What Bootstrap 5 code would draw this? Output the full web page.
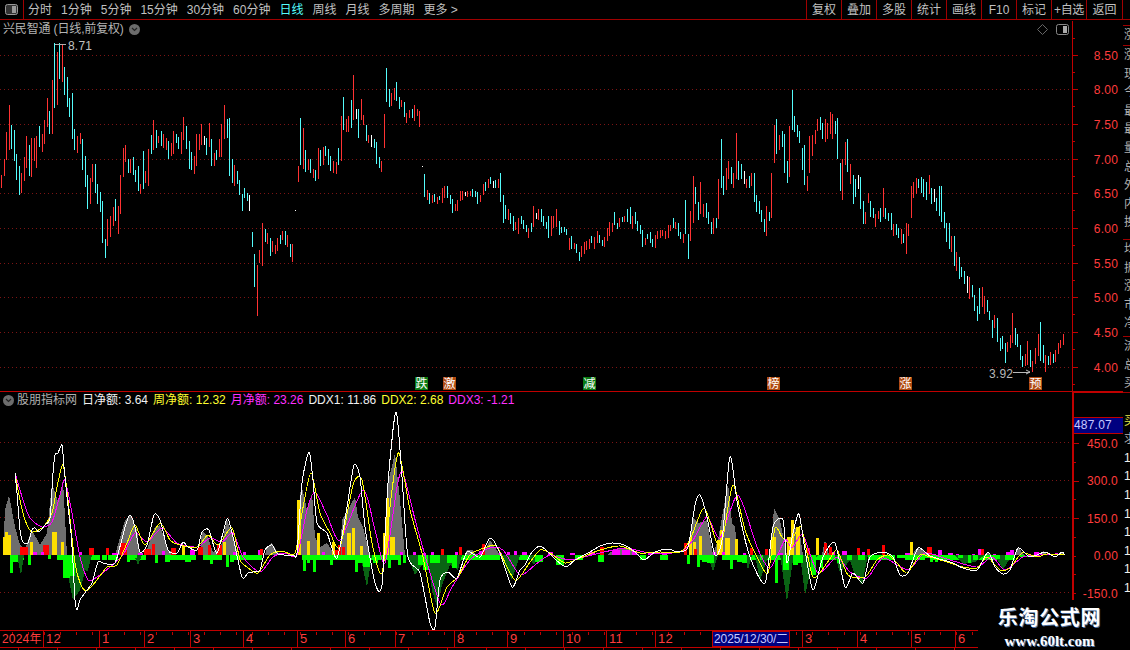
<!DOCTYPE html>
<html lang="zh-CN">
<head>
  <meta charset="UTF-8">
  <title>兴民智通 日线</title>
  <meta name="viewport" content="width=device-width, initial-scale=1">
  <link href="https://cdn.jsdelivr.net/npm/bootstrap@5.3.0/dist/css/bootstrap.min.css" rel="stylesheet">
  <style>
    html, body { height: 650px; overflow: hidden; background: #000; }
    body { font-family: "Liberation Sans", "Noto Sans CJK SC", sans-serif; font-size: 12px; line-height: 1; color: #c0c0c0; }
    .tool-bar { height: 20px; border-bottom: 1px solid #a00000; }
    .tool-toggle { width: 24px; border-right: 1px solid #a00000; }
    .period-list { gap: 9px; padding-left: 4px; }
    .period-on { color: #54fcfc; }
    .tool-btn { width: 35px; border-left: 1px solid #a00000; white-space: nowrap; }
    .tool-btn:last-child { width: 37px; border-right: 1px solid #a00000; }
    .tool-btn.tight { letter-spacing: -.3px; }
    .tool-gap { width: 7px; }
    .chart-col { width: 1123px; }
    .chart-col svg { display: block; }
    .chart-col text { font-family: "Liberation Sans", "Noto Sans CJK SC", sans-serif; }
    .pane-box { position: relative; }
    .pane-title { position: absolute; left: 3px; top: 3px; gap: 5px; color: #b4b4b4; font-size: 12px; letter-spacing: -.15px; }
    .pane-legend { position: absolute; left: 3px; top: 2px; gap: 5px; font-size: 12px; white-space: nowrap; }
    .pane-legend .leg-gray { margin-left: -2px; }
    .pane-tools { position: absolute; right: 54px; top: 4px; gap: 8px; }
    .drop-dot { width: 11px; height: 11px; border-radius: 50%; background: #6c6c6c; }
    .leg-gray { color: #b0b0b0; }
    .leg-white { color: #f0f0f0; }
    .leg-yellow { color: #ffff30; }
    .leg-pink { color: #ff30ff; }
    .side-strip { width: 7px; overflow: hidden; font-size: 12px; color: #b0b0b0; white-space: nowrap; }
    .strip-sec { overflow: hidden; border-top: 1px solid #a00000; }
    .strip-row { height: 18.6px; line-height: 18.6px; padding-left: 1px; }
    .strip-mark { color: #e6e64a; }
    .strip-num { color: #f0f0f0; }
    .water-mark { position: absolute; right: 0; bottom: 0; width: 152px; height: 50px; background: #000; text-align: center; padding-right: 9px; }
    .water-cn { font-weight: 700; font-size: 20px; letter-spacing: .7px; color: #fff; text-shadow: 1px 1px 0 #4a6ea0; margin-top: 7px; line-height: 22px; }
    .water-url { font-family: "Liberation Serif", serif; font-weight: 700; font-size: 15px; color: #fff; text-shadow: 1px 1px 0 #4a6ea0; margin-top: 5px; }
  </style>
</head>
<body>

<div class="d-flex flex-column position-relative">
  <!-- top toolbar -->
  <div class="tool-bar d-flex align-items-stretch">
    <div class="tool-toggle d-flex align-items-center justify-content-center">
      <svg width="13" height="11" viewBox="0 0 13 11"><rect x=".5" y=".5" width="12" height="10" rx="2" fill="#333" stroke="#999"/><rect x="7" y="2" width="4" height="7" fill="#999"/></svg>
    </div>
    <div class="period-list d-flex align-items-center">
      <span>分时</span><span>1分钟</span><span>5分钟</span><span>15分钟</span><span>30分钟</span><span>60分钟</span>
      <span class="period-on">日线</span><span>周线</span><span>月线</span><span>多周期</span><span>更多 &gt;</span>
    </div>
    <div class="d-flex align-items-stretch ms-auto">
      <div class="tool-btn d-flex align-items-center justify-content-center">复权</div>
      <div class="tool-btn d-flex align-items-center justify-content-center">叠加</div>
      <div class="tool-btn d-flex align-items-center justify-content-center">多股</div>
      <div class="tool-btn d-flex align-items-center justify-content-center">统计</div>
      <div class="tool-btn d-flex align-items-center justify-content-center">画线</div>
      <div class="tool-btn d-flex align-items-center justify-content-center">F10</div>
      <div class="tool-btn d-flex align-items-center justify-content-center">标记</div>
      <div class="tool-btn tight d-flex align-items-center justify-content-center">+自选</div>
      <div class="tool-btn d-flex align-items-center justify-content-center">返回</div>
    </div>
    <div class="tool-gap"></div>
  </div>

  <div class="d-flex">
    <div class="chart-col">
      <div class="pane-box">
        <svg id="priceSvg" width="1123" height="372" viewBox="0 20 1123 372"></svg>
        <div class="pane-title d-flex align-items-center">
          <span>兴民智通 (日线,前复权)</span>
          <span class="drop-dot d-flex align-items-center justify-content-center"><svg width="7" height="5" viewBox="0 0 7 5"><path d="M1 1l2.5 2.5L6 1" fill="none" stroke="#222" stroke-width="1.2"/></svg></span>
        </div>
        <div class="pane-tools d-flex align-items-center">
          <svg width="11" height="11" viewBox="0 0 11 11"><path d="M5.5.5l5 5-5 5-5-5z" fill="none" stroke="#666"/></svg>
          <svg width="13" height="11" viewBox="0 0 13 11"><rect x=".5" y=".5" width="12" height="10" rx="2" fill="#000" stroke="#888"/><rect x="7" y="2" width="4" height="7" fill="#aaa"/></svg>
        </div>
      </div>
      <div class="pane-box">
        <svg id="ddxSvg" width="1123" height="238" viewBox="0 392 1123 238"></svg>
        <div class="pane-legend d-flex align-items-center">
          <span class="drop-dot d-flex align-items-center justify-content-center"><svg width="7" height="5" viewBox="0 0 7 5"><path d="M1 1l2.5 2.5L6 1" fill="none" stroke="#222" stroke-width="1.2"/></svg></span>
          <span class="leg-gray">股朋指标网</span>
          <span class="leg-white">日净额: 3.64</span>
          <span class="leg-yellow">周净额: 12.32</span>
          <span class="leg-pink">月净额: 23.26</span>
          <span class="leg-white">DDX1: 11.86</span>
          <span class="leg-yellow">DDX2: 2.68</span>
          <span class="leg-pink">DDX3: -1.21</span>
        </div>
      </div>
      <svg id="dateSvg" width="1123" height="20" viewBox="0 630 1123 20"></svg>
    </div>
    <div class="side-strip" id="sideStrip"></div>
  </div>

  <div class="water-mark">
    <div class="water-cn">乐淘公式网</div>
    <div class="water-url">www.60lt.com</div>
  </div>
</div>

<script src="https://cdn.jsdelivr.net/npm/bootstrap@5.3.0/dist/js/bootstrap.bundle.min.js"></script>
<script>
  const AXIS = "#c00000", GRID = "#7c1414", LABEL = "#ff3c3c";
  const COL = { r: "#ff3232", c: "#54fcfc", w: "#ffffff" };

  function line(x1, y1, x2, y2, c, extra) {
    return `<line x1="${x1}" y1="${y1 + .5}" x2="${x2}" y2="${y2 + .5}" stroke="${c}" shape-rendering="crispEdges" ${extra || ""}/>`;
  }
  function dotted(y) { return line(0, y, 1072, y, GRID, 'stroke-dasharray="1 3"'); }
  function label(x, y, txt, c, anchor, size) {
    return `<text x="${x}" y="${y}" fill="${c}" font-size="${size || 12}" text-anchor="${anchor || "end"}" letter-spacing=".2">${txt}</text>`;
  }

  // candle bars read off the picture: [offset x, offset y, "colour x,top,bottom ..."] at 3x
  const candleGroups = [
    [0, 110, "r4,195,233 r13,148,200 r19,67,152 r28,-15,120 c34,45,117 c43,60,152 c49,132,209 c58,168,254 r64,189,249 r73,141,212 r79,78,174 c88,105,197 r94,84,201 r103,84,153 r109,78,173 c118,48,110 r127,72,125 r133,30,101 r142,-36,51 c148,3,71 r157,-90,72 c163,-201,-6 r172,-174,-15 c178,-201,-93 r187,-198,-84 c193,-129,-45 c202,-99,-9 c208,-36,21 c217,-51,87 c223,57,120 r232,78,129 r241,69,102 c247,87,180 c256,138,231 c262,195,297 r271,204,282 r277,162,216 c286,162,249 c292,222,282 c301,246,306 c307,273,399 c316,387,444 r322,327,408 r331,318,381 r340,291,348 c346,267,333 r355,288,372 r361,195,312 r370,114,201 r376,105,156 c385,147,189 r391,148,190 c400,141,195 c406,180,216 c415,168,243 r421,222,251 c430,123,237 r436,183,219 r445,117,228 c454,75,132 r460,30,120 c469,60,114 r475,78,99 c484,63,108 r490,72,114 r499,84,120 c505,93,147 r514,99,138 r520,63,132 c529,72,99 c535,81,117 r544,66,132 r550,21,90 c559,48,117 c568,93,177 c574,126,180 r583,138,192 r589,72,168 r598,72,120 r604,42,105 w613,78,105 c619,84,135 r628,39,111 c634,87,168 r643,129,168 c649,120,150 r658,87,141 r664,42,141 r673,-15,87 c682,27,84 c688,24,198 c697,147,219 r703,165,228 c712,183,222 c718,210,255 c727,252,303 c733,234,264 c742,249,273 w748,255,303 c757,366,411 c763,432,531 r772,465,618 r778,420,459 r787,339,468 c796,357,396 r802,369,402 c811,384,438 r817,393,426 r826,405,432 r832,384,423 c841,375,402 r847,363,390 c856,363,405 r862,375,411 c871,402,441 r877,402,456 w886,300,303"],
    [290, 60, "r25,318,366 c31,174,315 r40,204,327 c46,270,336 r55,297,330 c61,297,339 r70,327,354 c76,330,363 r85,264,357 c91,270,318 r100,261,315 c106,258,288 c115,267,315 c121,288,333 r130,303,339 r139,306,342 c145,264,315 r154,168,303 c160,111,210 r169,177,216 r175,168,216 c184,120,204 r190,45,180 w199,147,177 c205,147,234 r214,117,180 r220,165,195 c229,195,243 r235,225,249 w244,225,261 c253,237,264 c259,246,312 c268,291,324 r274,303,336 r283,162,264 c289,24,126 c298,87,141 r304,99,138 r313,84,120 c319,66,123 c328,111,147 r334,120,141 c343,126,171 r349,159,189 r358,150,174 c367,147,174 r373,135,183 r382,147,168 r388,153,201 w397,319,322"],
    [400, 160, "c72,42,111 r82,90,120 c88,99,132 r97,105,129 c103,102,126 r112,111,132 c118,108,120 r127,84,129 r133,78,114 c142,78,114 c151,105,132 c157,117,159 r166,132,153 r172,120,153 r181,93,123 r187,93,120 w196,96,108 r202,93,111 r211,93,108 c217,87,111 c226,93,111 c232,96,132 r241,105,126 r250,72,105 c256,66,93 r265,57,84 c271,51,72 w280,63,84 c286,60,84 r295,57,84 c301,39,126 c310,105,189 c316,135,177 r325,147,180 c331,159,192 c340,168,213 r346,186,210 r355,174,222 c364,168,192 c370,180,207 c379,195,216 r385,204,234 c394,189,216 r400,138,201 w409,159,177 r415,147,180 c424,147,186 c430,168,198 c439,186,207 c445,168,234 r454,168,228 r460,168,204 r469,147,201 c478,183,225 c484,201,219 c493,201,216 c499,207,225 r508,234,270 c514,228,267 r523,249,267 c529,252,279 c538,276,303 r544,258,291 r553,246,282 r559,243,270 r568,237,267 c574,228,249 r583,231,267 r592,213,249 c598,225,249 c607,240,258 r613,231,261 r622,204,243 r628,186,228 r637,189,216 c643,156,195 c652,189,207 r658,174,201 c667,171,186 r673,168,186 c682,147,186 c691,141,192 r697,168,207 c706,156,192 c712,183,213 c721,195,222 c727,210,261 r736,234,255 c742,222,237 c751,216,249 c757,237,261 r766,225,264 r772,213,237 r781,210,234 r787,210,228 r796,213,237 r805,195,234 r811,195,213 c820,174,204 r826,186,207 c835,189,228 c841,216,237 r850,222,249 c856,120,222 c865,222,297 r871,153,243 r880,48,189 c886,81,132 c895,126,180"],
    [700, 80, "r1,306,402 r10,372,411 c19,369,414 c25,396,432 c34,426,462 r40,414,462 c49,414,444 r55,297,417 c64,177,324 c70,288,345 r79,264,330 r85,243,297 c94,261,312 r100,279,324 r109,159,297 c115,243,300 c124,252,297 w133,273,312 r139,297,324 c148,288,324 r154,279,318 c163,279,366 c169,345,396 c178,363,402 c184,390,426 c193,417,456 r199,378,468 c208,396,423 r214,279,414 r223,135,249 c229,117,222 r238,165,210 c247,153,201 c253,162,279 c262,243,309 r268,138,291 c277,30,150 c283,108,156 c292,135,171 c298,153,189 c307,204,270 c313,195,315 r322,288,333 r328,168,279 r337,165,228 r346,150,192 r352,117,153 c361,111,150 c367,129,177 r376,117,186 r382,129,177 r391,96,162 r397,102,177 c406,123,162 c412,114,237 c421,249,333 r427,237,360 r436,186,255 c442,177,276 r451,252,312 c460,285,372 c466,297,351 w475,285,327 c481,291,387 c490,363,432 r496,396,432 r505,339,369 c511,363,411 c520,384,414 r526,402,441 r535,393,417 c541,384,426 r550,324,411 c556,384,417 c565,399,423 c574,399,450 r580,432,468 c589,432,465 c595,444,474 r604,447,492 c610,462,489 r619,429,522 r625,432,468 r634,318,414 r640,306,354 r649,294,342 c655,297,324 c664,291,339 c670,297,351 c679,306,360 r688,285,342 c694,324,372 w703,327,366 c709,354,393 c718,318,408"],
    [940, 170, "c4,48,156 c13,126,174 c19,159,216 c28,159,237 r34,198,246 c43,198,288 r49,246,303 c58,261,327 c64,291,321 c73,303,342 w82,318,369 r88,321,387 c97,345,381 c103,375,423 c112,408,453 c118,354,432 r127,351,411 r133,378,432 c142,390,426 c148,423,450 c157,450,504 r163,435,474 c172,444,516 c181,504,543 c187,498,537 c196,519,579 r202,516,546 r211,495,534 r217,429,519 c226,474,525 c232,492,531 c241,525,570 c247,558,591 r256,552,588 r262,513,585 c271,540,591 r277,573,606 r286,534,582 r295,492,558 c301,456,573 c310,525,579 r316,555,606 c325,558,585 r331,546,585 c340,552,579 r346,540,576 r355,519,552 r361,510,534 r370,492,525"]
  ];

  function drawPrice() {
    let s = "";
    const prices = ["8.50", "8.00", "7.50", "7.00", "6.50", "6.00", "5.50", "5.00", "4.50", "4.00"];
    const ys = [55, 89.5, 124.5, 159, 193.5, 228.5, 263, 297.5, 332.5, 367];
    ys.forEach(y => { s += dotted(Math.floor(y)); });
    candleGroups.forEach(g => {
      g[2].split(" ").forEach(b => {
        const p = b.slice(1).split(",").map(Number);
        const x = Math.floor(g[0] + p[0] / 3);
        s += `<rect x="${x}" y="${Math.round(g[1] + p[1] / 3)}" width="1" height="${Math.round((p[2] - p[1]) / 3)}" fill="${COL[b[0]]}" shape-rendering="crispEdges"/>`;
      });
    });
    // high / low marks
    s += line(55, 44, 66, 44, "#b0b0b0");
    s += label(68, 50, "8.71", "#c0c0c0", "start", 12);
    s += label(989, 378, "3.92", "#b8b8b8", "start", 12);
    s += line(1013, 372, 1030, 372, "#b8b8b8");
    s += `<path d="M1026 370l4 2-4 2" fill="none" stroke="#b8b8b8"/>`;
    // signal chips
    const chips = [[415, "跌", "#0a7a14"], [443, "激", "#b04a10"], [583, "减", "#0a7a14"], [767, "榜", "#b04a10"], [899, "涨", "#b04a10"], [1029, "预", "#b04a10"]];
    chips.forEach(c => {
      s += `<rect x="${c[0]}" y="377" width="13" height="13" fill="${c[2]}"/>`;
      s += label(c[0] + .5, 388, c[1], "#fff", "start", 12);
    });
    // axis
    s += line(1072, 20, 1072, 392, AXIS);
    ys.forEach((y, i) => {
      const yy = Math.floor(y);
      s += line(1072, yy, 1078, yy, AXIS);
      s += line(1072, yy + 17, 1075, yy + 17, AXIS);
      s += label(1118, yy + 5, prices[i], LABEL);
    });
    s += line(1072, 38, 1075, 38, AXIS);
    s += line(1123, 20, 1123, 392, AXIS);
    s += line(0, 391, 1123, 391, AXIS);
    document.getElementById("priceSvg").innerHTML = s;
  }

  // line anchors in page coordinates
  const white = [[15,473],[17,493],[20,530],[23,542],[28,543],[32,530],[35,528],[39,532],[45,525],[50,518],[53,473],[55,455],[58,453],[62,445],[64,467],[67,497],[71,533],[73,563],[75,600],[77,610],[80,600],[87,590],[92,583],[98,562],[103,563],[115,563],[125,527],[130,515],[135,527],[140,552],[147,545],[154,515],[160,520],[168,550],[177,553],[183,542],[188,547],[197,550],[202,532],[209,530],[217,553],[227,519],[233,537],[242,577],[248,573],[253,572],[260,570],[265,550],[272,545],[278,554],[293,555],[297,553],[302,483],[309,452],[313,480],[317,523],[327,533],[337,558],[347,507],[354,465],[360,477],[365,527],[375,583],[382,585],[388,483],[396,412],[402,477],[408,557],[420,573],[430,623],[435,627],[440,580],[448,572],[457,578],[467,552],[480,557],[490,538],[500,553],[512,587],[520,570],[525,565],[532,552],[540,546],[548,552],[556,560],[566,567],[575,560],[590,552],[600,546],[612,543],[624,545],[635,552],[644,560],[655,552],[668,549],[678,552],[688,547],[695,505],[700,495],[707,517],[715,555],[722,540],[729,462],[732,463],[738,507],[750,557],[765,583],[773,527],[783,520],[787,563],[793,533],[799,514],[805,550],[813,590],[823,557],[835,543],[845,587],[853,573],[863,583],[870,557],[883,552],[893,557],[900,575],[908,573],[918,548],[930,556],[943,560],[953,563],[963,568],[977,570],[988,552],[995,567],[1003,574],[1010,570],[1018,548],[1030,557],[1045,552],[1055,557],[1062,552],[1065,555]];
  const yellow = [[15,473],[20,500],[25,520],[32,532],[43,527],[52,513],[57,487],[63,465],[68,500],[75,563],[82,587],[88,590],[97,580],[107,567],[117,565],[127,543],[135,525],[145,545],[160,523],[170,540],[180,545],[197,547],[208,535],[218,545],[232,528],[240,560],[247,567],[258,573],[270,555],[282,551],[295,553],[302,513],[311,473],[320,513],[330,533],[340,547],[353,485],[362,480],[372,543],[382,573],[392,490],[399,453],[410,510],[423,557],[435,613],[447,587],[458,577],[470,555],[487,547],[497,547],[515,580],[530,562],[540,550],[550,553],[565,563],[580,558],[600,550],[620,546],[640,553],[660,552],[680,552],[690,540],[704,508],[717,543],[723,537],[733,485],[745,530],[757,557],[768,573],[775,528],[782,537],[790,543],[801,527],[813,577],[827,563],[837,550],[848,575],[865,577],[877,560],[888,555],[897,563],[907,573],[920,555],[930,557],[947,562],[963,567],[977,568],[987,557],[1000,570],[1010,568],[1022,553],[1037,557],[1047,554],[1065,555]];
  const pink = [[15,473],[23,500],[30,518],[42,527],[52,522],[60,495],[65,480],[72,513],[80,557],[88,580],[97,577],[110,567],[123,555],[135,533],[147,542],[162,528],[177,543],[197,547],[210,538],[222,542],[233,533],[243,557],[260,572],[273,557],[285,553],[297,555],[307,510],[315,492],[327,515],[340,540],[363,490],[375,530],[385,563],[397,487],[403,473],[417,527],[440,603],[452,587],[470,560],[490,548],[503,550],[520,575],[535,565],[550,555],[570,560],[600,553],[625,548],[650,553],[680,552],[693,540],[707,517],[720,538],[738,495],[757,547],[770,568],[785,540],[792,548],[803,535],[818,573],[837,557],[850,572],[867,578],[883,558],[908,570],[925,553],[950,560],[977,567],[992,557],[1005,570],[1023,557],[1040,555],[1065,555]];

  const grayAreas = [
    [[3,555],[5,510],[9,495],[15,527],[20,545],[25,550],[28,540],[32,530],[40,545],[47,533],[52,483],[58,502],[63,480],[67,555]],
    [[115,555],[125,520],[130,515],[137,530],[140,555]],
    [[145,555],[155,527],[160,525],[168,550],[177,555]],
    [[200,555],[202,530],[208,537],[213,553],[222,543],[227,519],[235,543],[238,555]],
    [[265,555],[267,547],[272,543],[278,553],[280,555]],
    [[297,555],[301,483],[307,510],[312,493],[315,537],[320,547],[327,543],[335,555]],
    [[340,555],[342,520],[355,497],[358,517],[363,527],[370,555]],
    [[385,555],[387,487],[395,453],[400,500],[403,533],[405,555]],
    [[465,555],[467,550],[473,550],[476,555]],
    [[482,555],[490,540],[500,555]],
    [[607,555],[615,549],[628,548],[640,555]],
    [[690,555],[692,517],[698,523],[707,520],[713,555],[718,540],[728,483],[732,523],[735,527],[738,555]],
    [[770,555],[774,508],[780,520],[787,555],[795,527],[800,535],[803,555]],
    [[822,555],[825,540],[829,555]],
    [[912,555],[917,548],[924,550],[928,555]],
    [[985,555],[987,552],[992,555]],[[1014,555],[1018,547],[1024,555]],[[1040,555],[1043,551],[1047,555]],[[1059,555],[1062,552],[1065,555]]
  ];
  const darkAreas = [
    [[17,555],[21,575],[24,555]],
    [[65,555],[68,575],[73,600],[80,590],[87,565],[92,555]],
    [[82,555],[87,573],[92,555]],
    [[134,555],[138,565],[142,555]],
    [[360,555],[367,587],[372,555]],
    [[407,555],[415,575],[422,565],[428,555]],
    [[427,555],[432,590],[437,607],[442,585],[450,565],[458,570],[462,555]],
    [[500,555],[512,580],[520,555]],
    [[528,555],[534,565],[540,555]],
    [[708,555],[713,572],[718,555]],
    [[745,555],[748,570],[752,555]],
    [[755,555],[760,580],[767,560],[770,555]],
    [[780,555],[787,602],[793,560],[800,555]],
    [[800,555],[805,595],[812,565],[818,555]],
    [[835,555],[840,573],[850,560],[855,575],[862,585],[868,555]],
    [[955,555],[963,564],[975,562],[985,555]],
    [[995,555],[1003,570],[1012,555]]
  ];

  // stretches where the green bars run together under the zero line
  const greenBands = [[10,24],[62,100],[108,118],[130,146],[170,196],[205,222],[232,262],[302,400],[410,500],[505,530],[700,712],[722,860],[868,895],[905,925],[930,1015]];

  // indicator bars: [offset x, offset y, scale, colour, [x, width, top] ...]
  const barSets = [
    [0,430,3,"#ffe000",[[9,15,322],[15,10,305],[24,9,315],[90,10,335],[155,15,305],[183,8,335],[545,10,345],[668,10,335]]],
    [0,430,3,"#ff0000",[[60,25,352],[130,18,345],[267,15,353],[318,10,353],[360,20,340],[432,20,357],[455,10,343],[512,15,353],[595,15,352],[625,8,345],[652,15,345]]],
    [0,430,3,"#ff00ff",[[100,12,365],[122,8,365],[237,8,365],[335,20,370],[415,15,370],[485,10,363],[570,15,360],[700,8,365],[730,8,365],[775,5,360]]],
    [0,430,3,"#00ff00",[[30,10,430],[40,15,395],[84,10,405],[143,10,388],[170,15,390],[190,20,445],[210,15,437],[305,15,390],[325,15,388],[380,10,395],[395,15,385],[465,8,400],[495,15,395],[525,15,388],[555,18,397],[610,15,390],[630,10,402],[678,10,410],[690,12,397],[755,20,390]]],
    [260,400,3,"#ffe000",[[112,13,300],[140,8,423],[170,10,398],[215,10,425],[262,12,400],[275,10,385],[300,10,438],[370,8,398],[377,10,295],[390,15,410]]],
    [260,400,3,"#ff0000",[[0,10,448],[225,8,450],[233,8,435],[247,8,440],[543,8,448],[597,8,442],[665,10,432]]],
    [260,400,3,"#ff00ff",[[185,10,455],[420,10,455],[460,10,457],[490,10,460],[513,10,455],[585,10,455],[658,10,453],[717,10,458],[740,10,457],[762,10,453]]],
    [260,400,3,"#00ff00",[[130,10,513],[158,10,515],[140,10,490],[190,15,480],[210,10,495],[285,10,515],[295,15,490],[310,20,500],[340,15,490],[385,8,505],[413,10,495],[430,10,490],[475,15,495],[490,15,510],[510,30,490],[560,15,490],[575,15,505],[605,20,480],[640,15,475]]],
    [520,0,1,"#ff00ff",[[2,5,552],[28,5,552],[50,5,553],[70,5,552],[92,8,550],[102,8,550],[112,5,551],[128,5,553],[142,5,552]]],
    [520,0,1,"#ff0000",[[80,4,547]]],
    [520,0,1,"#00ff00",[[15,8,562],[36,8,565],[55,8,560],[78,6,562],[120,6,560],[140,8,560]]],
    [680,440,3,"#ffe000",[[28,10,290],[40,10,305],[57,10,288],[110,8,300],[120,10,270],[135,15,295],[165,10,297],[272,15,292],[322,12,292],[333,10,240],[347,12,260],[408,8,295],[690,8,307]]],
    [680,440,3,"#ff0000",[[12,10,310],[42,10,327],[210,10,323],[255,8,327],[380,10,323],[432,10,310],[447,8,322],[530,10,323],[562,8,327],[605,10,315],[742,8,322]]],
    [680,440,3,"#ff00ff",[[100,10,335],[125,10,335],[190,8,340],[295,15,340],[455,10,335],[485,15,332],[545,10,337],[675,15,340]]],
    [680,440,3,"#00ff00",[[20,10,372],[50,10,380],[65,15,365],[80,20,370],[150,10,387],[170,15,365],[185,15,370],[240,10,360],[285,10,428],[310,18,390],[340,15,375],[355,15,370],[392,15,405],[420,10,385],[470,10,370],[500,15,360],[535,20,360],[565,15,360],[600,10,355],[650,30,355],[700,25,355],[730,20,355]]],
    [930,350,3,"#ff00ff",[[25,12,600],[55,15,610],[77,8,612],[125,8,612],[145,12,598],[190,8,612],[228,20,607],[240,12,600],[312,15,605],[375,8,610]]],
    [930,350,3,"#ff0000",[[0,5,592],[152,8,597]]],
    [930,350,3,"#00ff00",[[0,10,635],[15,8,637],[55,15,628],[85,15,625],[115,10,640],[130,15,630],[165,20,622],[195,15,628],[225,20,630],[270,15,620],[290,20,622]]]
  ];

  // Catmull-Rom through the anchors, keeps the curves soft like the original
  function curve(pts, c) {
    let d = `M${pts[0][0]} ${pts[0][1]}`;
    for (let i = 0; i < pts.length - 1; i++) {
      const a = pts[Math.max(i - 1, 0)], b = pts[i], e = pts[i + 1], f = pts[Math.min(i + 2, pts.length - 1)];
      const t = 0.12;
      d += `C${(b[0] + (e[0] - a[0]) * t).toFixed(1)} ${(b[1] + (e[1] - a[1]) * t).toFixed(1)} ${(e[0] - (f[0] - b[0]) * t).toFixed(1)} ${(e[1] - (f[1] - b[1]) * t).toFixed(1)} ${e[0]} ${e[1]}`;
    }
    return `<path d="${d}" fill="none" stroke="${c}" stroke-width="1" shape-rendering="crispEdges"/>`;
  }
  function area(pts, c) {
    return `<polygon points="${pts.map(p => p.join(",")).join(" ")}" fill="${c}" shape-rendering="crispEdges"/>`;
  }

  function drawDdx() {
    let s = "";
    [442, 480, 517, 592].forEach(y => { s += dotted(y); });
    grayAreas.forEach(a => { s += area(a, "#6e6e6e"); });
    greenBands.forEach(b => {
      s += `<rect x="${b[0]}" y="555" width="${b[1] - b[0]}" height="5" fill="#00ff00" shape-rendering="crispEdges"/>`;
    });
    darkAreas.forEach(a => { s += area(a, "#0a6414"); });
    const base = 555;
    barSets.forEach(set => {
      const [ox, oy, k, c, list] = set;
      list.forEach(b => {
        const x = Math.round(ox + b[0] / k), w = Math.max(Math.round(b[1] / k), 2), y = Math.round(oy + b[2] / k);
        const top = Math.min(y, base), h = Math.max(Math.abs(y - base), 1);
        s += `<rect x="${x}" y="${top}" width="${w}" height="${h}" fill="${c}" shape-rendering="crispEdges"/>`;
      });
    });
    s += curve(pink, "#ff00ff") + curve(yellow, "#ffff00") + curve(white, "#ffffff");
    // axis
    s += `<rect x="1072" y="392" width="2" height="238" fill="${AXIS}"/>`;
    s += line(1123, 392, 1123, 630, AXIS);
    s += line(1074, 392, 1123, 392, AXIS);
    s += `<rect x="1074" y="417" width="49" height="16" fill="#000080"/>`;
    s += line(1074, 417, 1123, 417, AXIS) + line(1074, 433, 1123, 433, AXIS);
    s += label(1074, 429, "487.07", "#c8c8ff", "start", 12);
    const vals = [["450.0", 443], ["300.0", 480], ["150.0", 518], ["0.00", 555], ["-150.0", 593]];
    for (let y = 443; y < 600; y += 18.75) { s += line(1074, Math.round(y), Math.round(y - 443) % 37 < 2 ? 1079 : 1076, Math.round(y), AXIS); }
    vals.forEach(v => { s += label(1118, v[1] + 5, v[0], LABEL); });
    document.getElementById("ddxSvg").innerHTML = s;
  }

  function drawDates() {
    let s = line(0, 630, 1072, 630, AXIS) + line(0, 647, 1123, 647, AXIS);
    const months = [[43, "12"], [99, "1"], [144, "2"], [190, "3"], [243, "4"], [297, "5"], [345, "6"], [395, "7"], [454, "8"], [507, "9"], [563, "10"], [606, "11"], [655, "12"], [802, "3"], [857, "4"], [911, "5"], [955, "6"]];
    for (let x = 12; x < 1072; x += 16) { s += line(x, 631, x, 634, AXIS); }
    for (let x = 18; x < 1072; x += 39) { s += line(x, 647, x, 650, AXIS); }
    months.forEach(m => {
      s += line(m[0], 630, m[0], 647, AXIS);
      s += label(m[0] + 3, 643, m[1], LABEL, "start", 13);
    });
    s += label(2, 643, "2024年", LABEL, "start", 12);
    s += `<rect x="712" y="631" width="77" height="15" fill="#000080" stroke="${AXIS}" shape-rendering="crispEdges"/>`;
    s += `<text x="714" y="643" fill="#c8c8ff" font-size="12" letter-spacing="-.1">2025/12/30/二</text>`;
    document.getElementById("dateSvg").innerHTML = s;
  }

  // clipped right-hand quote panel, only its first pixels show; sections split by red rules
  function drawStrip() {
    const secs = [
      [5, [], ""],
      [20, ["涨"], ""],
      [194, ["涨", "现", "今", "最", "最", "量", "总", "外", "内", "换"], ""],
      [97, ["均", "振", "涨", "市", "净"], ""],
      [56, ["流", "总", "买"], ""],
      [258, ["", "买", "求", "1", "1", "1", "1", "1", "1", "1", "1", "1"], "strip-num"]
    ];
    let h = "";
    secs.forEach((sec, i) => {
      h += `<div class="strip-sec" style="height:${sec[0]}px;${i === 0 ? "border-top:0" : ""}">`;
      sec[1].forEach((t, n) => {
        const cls = i === 5 && n === 1 ? "strip-mark" : (i === 5 && n === 2 ? "" : sec[2]);
        h += `<div class="strip-row ${cls}">${t}</div>`;
      });
      h += "</div>";
    });
    document.getElementById("sideStrip").innerHTML = h;
  }

  drawPrice();
  drawDdx();
  drawDates();
  drawStrip();
</script>
</body>
</html>
